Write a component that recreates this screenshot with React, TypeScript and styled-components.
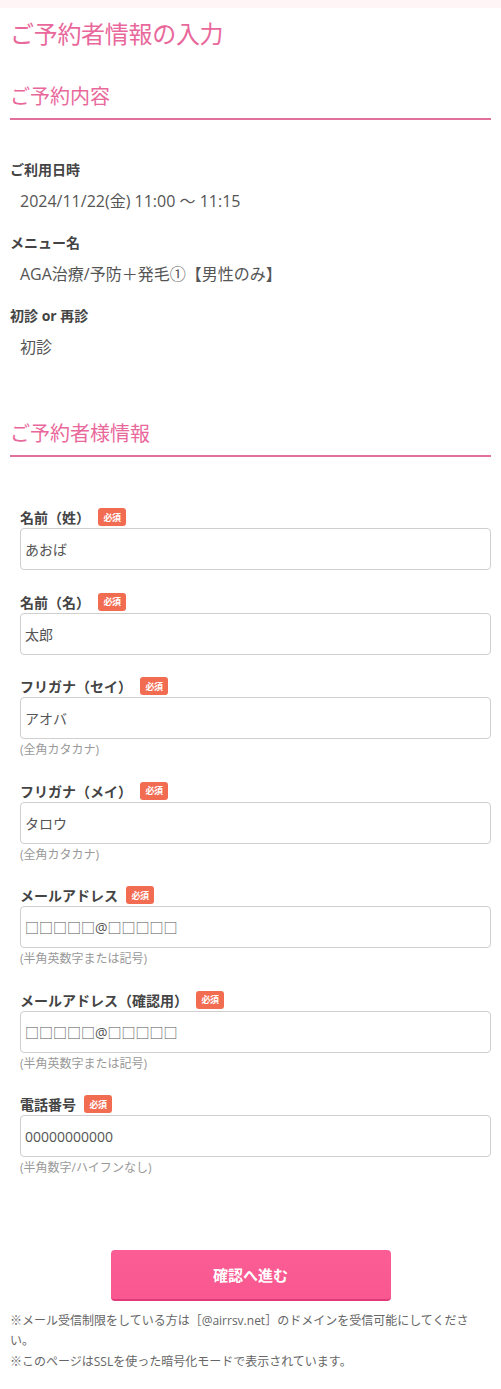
import React from "react";
import styled, { createGlobalStyle } from "styled-components";

const Global = createGlobalStyle`
  html, body { margin: 0; padding: 0; background: #fff; }
  body {
    font-family: "Open Sans", "Noto Sans CJK JP", sans-serif;
    color: #444;
    -webkit-font-smoothing: antialiased;
  }
  * { box-sizing: border-box; }
`;

const TopBand = styled.div`
  height: 8px;
  background: #fff5f7;
`;

const Page = styled.main`
  padding: 0 10px;
`;

const Title = styled.h1`
  margin: 9px 0 0;
  font-size: 24px;
  line-height: 34px;
  font-weight: 400;
  color: #e9689b;
  letter-spacing: -0.3px;
`;

const SectionHead = styled.h2<{ $top: number }>`
  margin: ${(p) => p.$top}px 0 0;
  padding-bottom: 7px;
  border-bottom: 2px solid #e2709c;
  font-size: 20px;
  line-height: 28px;
  font-weight: 400;
  color: #e9689b;
`;

const InfoList = styled.dl`
  margin: 40px 0 0;
  display: flex;
  flex-direction: column;
`;

const InfoLabel = styled.dt`
  font-size: 14px;
  line-height: 20px;
  font-weight: 700;
  color: #444;
  margin-top: 21px;
  &:first-child { margin-top: 0; }
`;

const InfoValue = styled.dd`
  margin: 10px 0 0;
  padding-left: 10px;
  font-size: 16px;
  line-height: 22px;
  color: #555;
`;

const Form = styled.form`
  margin-top: 51px;
  padding: 0 0 0 10px;
  display: flex;
  flex-direction: column;
`;

const Field = styled.div`
  display: flex;
  flex-direction: column;
  margin-bottom: 22.5px;
`;

const LabelRow = styled.div`
  display: flex;
  align-items: center;
  gap: 8px;
  height: 20px;
`;

const Label = styled.label`
  font-size: 14px;
  line-height: 20px;
  font-weight: 700;
  color: #444;
`;

const Badge = styled.span`
  display: inline-flex;
  align-items: center;
  justify-content: center;
  width: 28px;
  height: 18px;
  margin-top: -2px;
  border-radius: 3px;
  background: #f26c52;
  color: #fff;
  font-size: 9px;
  font-weight: 700;
  letter-spacing: -0.5px;
`;

const Input = styled.input`
  width: 100%;
  height: 42px;
  padding: 0 4px;
  border: 1px solid #cfcfcf;
  border-radius: 4px;
  background: #fff;
  font-family: inherit;
  font-size: 14px;
  color: #555;
  outline: none;
`;

const Note = styled.p`
  margin: 2px 0 0;
  font-size: 12px;
  line-height: 18px;
  color: #999;
`;

const ButtonWrap = styled.div`
  display: flex;
  justify-content: center;
  margin-top: 50px;
`;

const Submit = styled.button`
  width: 280px;
  height: 51px;
  border: none;
  border-bottom: 2px solid #e23a78;
  border-radius: 4px;
  background: linear-gradient(#fb5d94, #f8588f);
  color: #fff;
  font-family: inherit;
  font-size: 15px;
  font-weight: 700;
  cursor: pointer;
`;

const Footer = styled.div`
  margin: 10px 0 0;
  padding-bottom: 18px;
  font-size: 12px;
  line-height: 20.5px;
  color: #666;
`;

const FooterLine = styled.p`
  margin: 0;
`;

type FieldDef = { label: string; value: string; note?: string };

const fields: FieldDef[] = [
  { label: "名前（姓）", value: "あおば" },
  { label: "名前（名）", value: "太郎" },
  { label: "フリガナ（セイ）", value: "アオバ", note: "(全角カタカナ)" },
  { label: "フリガナ（メイ）", value: "タロウ", note: "(全角カタカナ)" },
  { label: "メールアドレス", value: "□□□□□@□□□□□", note: "(半角英数字または記号)" },
  { label: "メールアドレス（確認用）", value: "□□□□□@□□□□□", note: "(半角英数字または記号)" },
  { label: "電話番号", value: "00000000000", note: "(半角数字/ハイフンなし)" },
];

export default function App() {
  return (
    <>
      <Global />
      <TopBand />
      <Page>
        <Title>ご予約者情報の入力</Title>
        <SectionHead $top={32}>ご予約内容</SectionHead>
        <InfoList>
          <InfoLabel>ご利用日時</InfoLabel>
          <InfoValue>2024/11/22(金) 11:00 〜 11:15</InfoValue>
          <InfoLabel>メニュー名</InfoLabel>
          <InfoValue>AGA治療/予防＋発毛①【男性のみ】</InfoValue>
          <InfoLabel>初診 or 再診</InfoLabel>
          <InfoValue>初診</InfoValue>
        </InfoList>
        <SectionHead $top={62}>ご予約者様情報</SectionHead>
        <Form onSubmit={(e) => e.preventDefault()}>
          {fields.map((f) => (
            <Field key={f.label}>
              <LabelRow>
                <Label>{f.label}</Label>
                <Badge>必須</Badge>
              </LabelRow>
              <Input defaultValue={f.value} />
              {f.note && <Note>{f.note}</Note>}
            </Field>
          ))}
        </Form>
        <ButtonWrap>
          <Submit type="button">確認へ進む</Submit>
        </ButtonWrap>
        <Footer>
          <FooterLine>※メール受信制限をしている方は［@airrsv.net］のドメインを受信可能にしてください。</FooterLine>
          <FooterLine>※このページはSSLを使った暗号化モードで表示されています。</FooterLine>
        </Footer>
      </Page>
    </>
  );
}
